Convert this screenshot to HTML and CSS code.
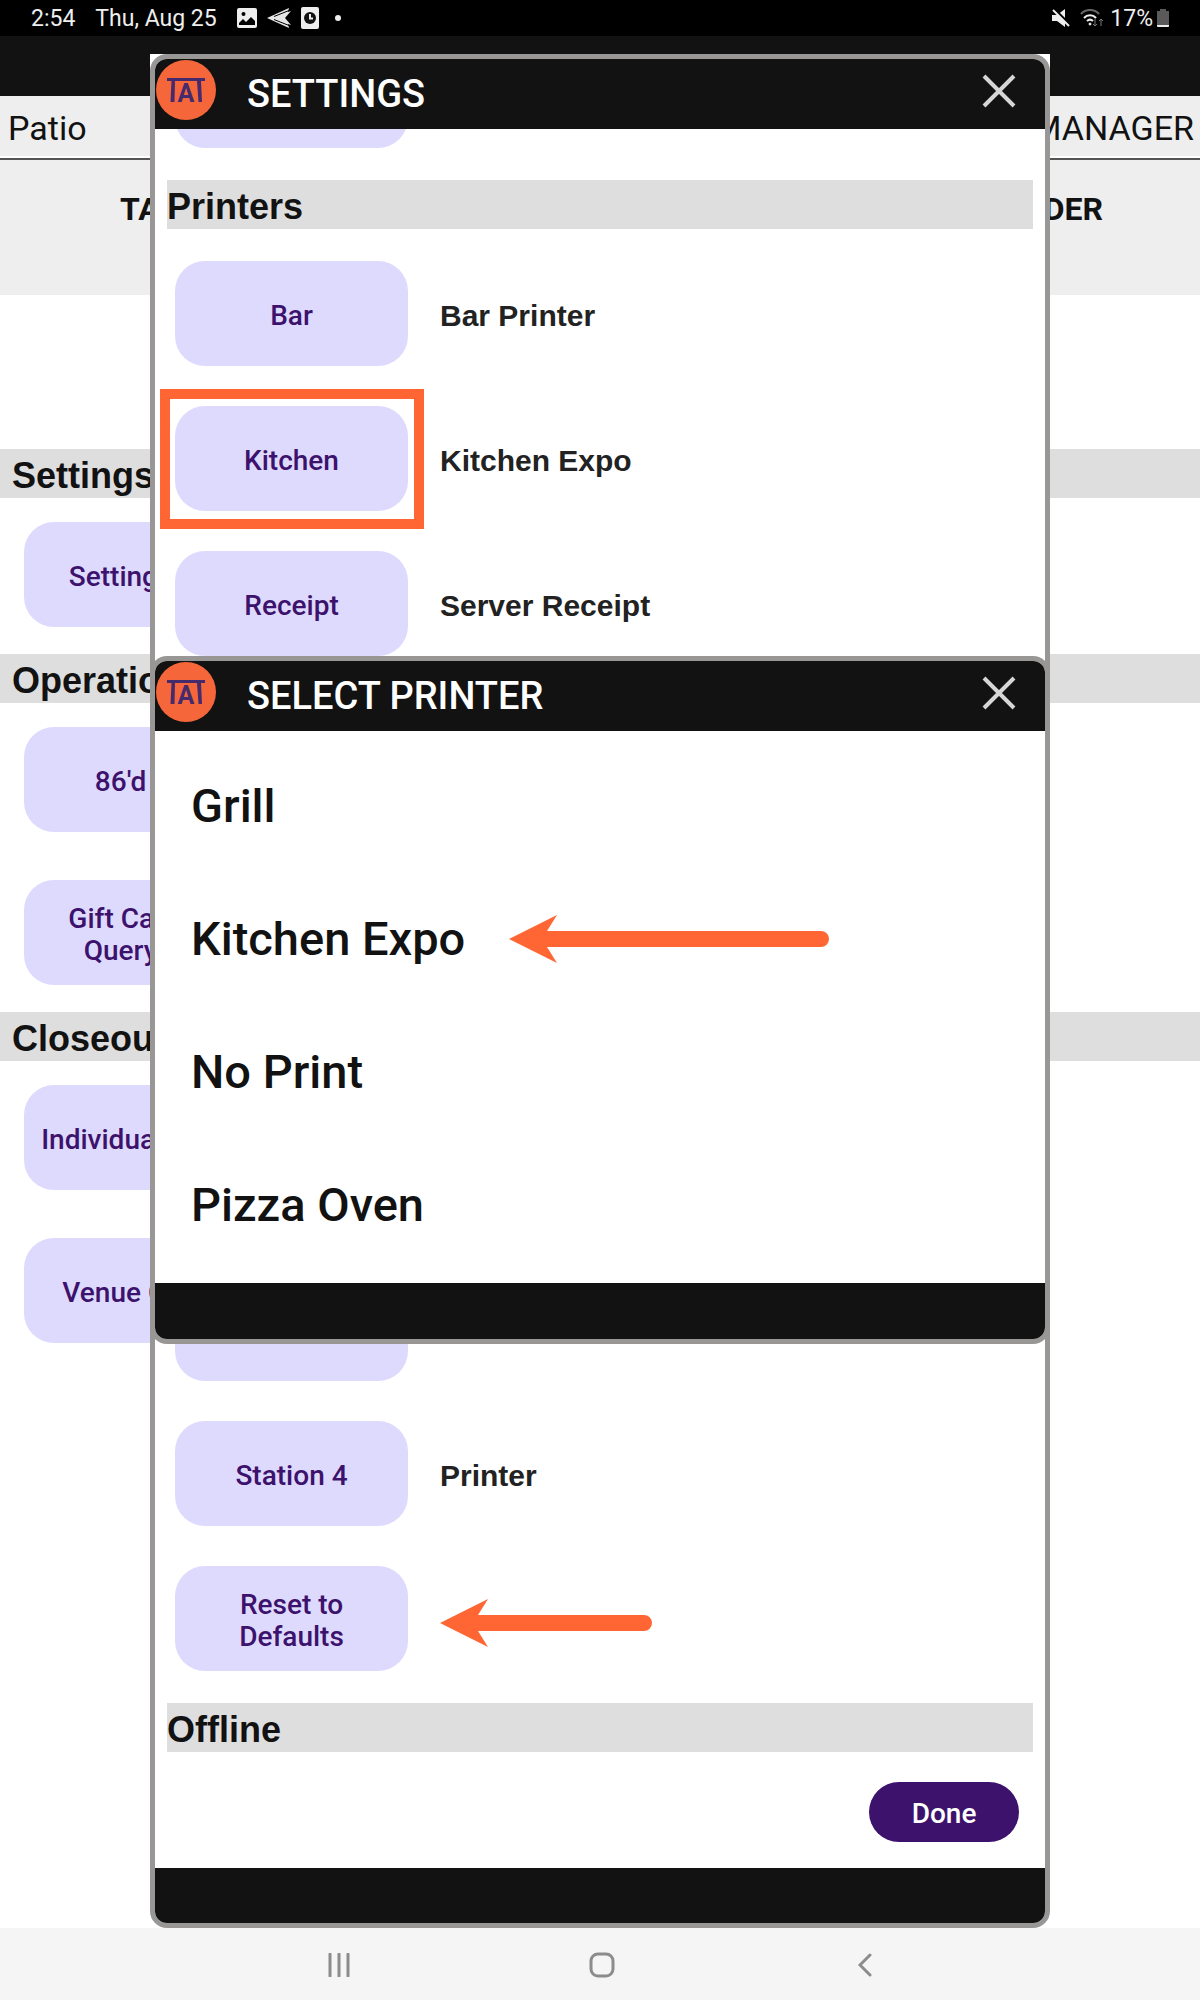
FILE: index.html
```html
<!DOCTYPE html>
<html lang="en">
<head>
<meta charset="utf-8">
<title>Settings - Select Printer</title>
<link rel="stylesheet" href="styles.css">
</head>
<body>
<svg width="0" height="0" class="defs" aria-hidden="true">
  <symbol id="logo" viewBox="0 0 60 60">
    <circle cx="30" cy="30" r="30" fill="#f5673b"/>
    <path d="M11 18h38v3H45L46 42H42.500L41 21H19L18.500 42H14.500L15.500 21H11z" fill="#452a6c"/>
    <text x="30" y="42" text-anchor="middle" class="logo-letter">A</text>
  </symbol>
  <symbol id="close" viewBox="0 0 34 34">
    <path d="M2 2L32 32M32 2L2 32" stroke="#d6d6d6" stroke-width="4" fill="none"/>
  </symbol>
</svg>

<header class="status">
  <span class="time">2:54</span>
  <span class="date">Thu, Aug 25</span>
  <svg class="s-icon" width="20" height="20" viewBox="0 0 20 20"><path fill="#eee" fill-rule="evenodd" d="M2 0h16a2 2 0 0 1 2 2v16a2 2 0 0 1-2 2H2a2 2 0 0 1-2-2V2a2 2 0 0 1 2-2zM6.500 4a2 2 0 1 0 0 4a2 2 0 0 0 0-4zM2 17h16v-4l-4-4-5 5-3-3-4 4z"/></svg>
  <svg class="s-icon" width="24" height="20" viewBox="0 0 24 20"><path fill="#e6e6e6" d="M0 10L22 0L21 4L24 3L18 10L24 17L21 16L22 20z"/><path d="M7 8.500L22 2.500M7 11.500L22 17.500" stroke="#000" stroke-width="1"/></svg>
  <svg class="s-icon" width="18" height="22" viewBox="0 0 18 22"><rect width="18" height="22" rx="2" fill="#eee"/><circle cx="9" cy="11" r="6" fill="#111"/><path d="M9 7v4.500h3" stroke="#eee" stroke-width="2" fill="none"/></svg>
  <svg class="s-icon s-dot" width="6" height="6" viewBox="0 0 6 6"><circle cx="3" cy="3" r="3" fill="#eee"/></svg>
  <span class="spacer"></span>
  <svg class="s-icon" width="18" height="18" viewBox="0 0 18 18"><path fill="#eee" d="M0 6h5l8-6v18l-8-6H0z"/><path d="M2 0L18 16" stroke="#000" stroke-width="3"/><path d="M1 1L17 17" stroke="#eee" stroke-width="2"/></svg>
  <svg class="s-icon s-wifi" width="24" height="18" viewBox="0 0 24 18" fill="none" stroke-width="2"><path d="M1 5a12 12 0 0 1 18 0" stroke="#666"/><path d="M4 9a8 8 0 0 1 12 0M7 12a4.500 4.500 0 0 1 6 0" stroke="#eee"/><circle cx="10" cy="15" r="1" fill="#eee" stroke="#eee" stroke-width="1"/><path d="M15 10v7M13 15l2 2 2-2M21 17v-7M19 12l2-2 2 2" stroke="#777" stroke-width="1"/></svg>
  <span class="battery-text">17%</span>
  <svg class="s-icon" width="12" height="19" viewBox="0 0 12 19"><path fill="#5a5a5a" d="M3 0h6v2h3v15H0V2h3z"/><path fill="#eee" d="M0 16h12v1a1 1 0 0 1-1 1H1a1 1 0 0 1-1-1z"/></svg>
</header>

<div class="stage">
  <main class="page">
    <div class="page-top"></div>
    <div class="venue-bar"><span>Patio</span><span>MANAGER</span></div>
    <nav class="tabs"><a href="#tables">TABLES</a><a href="#order">ORDER</a></nav>
    <section class="group">
      <h2 class="bar">Settings</h2>
      <button class="tile">Settings All</button>
    </section>
    <section class="group">
      <h2 class="bar">Operations</h2>
      <button class="tile">86'd All</button>
      <button class="tile">Gift Card ID Query All</button>
    </section>
    <section class="group">
      <h2 class="bar">Closeout</h2>
      <button class="tile">Individual Close</button>
      <button class="tile">Venue Close</button>
    </section>
  </main>

  <div class="settings-wrap">
    <section class="dialog settings" role="dialog" aria-labelledby="settings-title">
      <header class="dialog-head">
        <svg class="logo" width="60" height="60"><use href="#logo"/></svg>
        <h1 class="dialog-title" id="settings-title">SETTINGS</h1>
        <button class="close" aria-label="Close settings"><svg width="34" height="34"><use href="#close"/></svg></button>
      </header>
      <div class="scroller">
        <div class="rows"><div class="row"><button class="tile" aria-label="General"></button></div></div>
        <h2 class="bar">Printers</h2>
        <div class="rows">
          <div class="row"><button class="tile">Bar</button><span class="value">Bar Printer</span></div>
          <div class="row"><button class="tile marked">Kitchen</button><span class="value">Kitchen Expo</span></div>
          <div class="row"><button class="tile">Receipt</button><span class="value">Server Receipt</span></div>
          <div class="row"><button class="tile" aria-label="Report"></button></div>
          <div class="row"><button class="tile" aria-label="Runner"></button></div>
          <div class="row"><button class="tile" aria-label="Station 1"></button></div>
          <div class="row"><button class="tile" aria-label="Station 2"></button></div>
          <div class="row"><button class="tile" aria-label="Station 3"></button></div>
          <div class="row"><button class="tile">Station 4</button><span class="value">Printer</span></div>
          <div class="row"><button class="tile">Reset to Defaults</button>
            <svg class="arrow" width="212" height="48" viewBox="0 0 212 48"><path fill="#ff6633" d="M0 24L48 0L38 16H204a8 8 0 0 1 0 16H38L48 48z"/></svg>
          </div>
        </div>
        <h2 class="bar">Offline</h2>
      </div>
      <div class="actions"><button class="done">Done</button></div>
      <footer class="dialog-foot"></footer>
    </section>
  </div>
</div>

<div class="overlay">
  <section class="dialog picker" role="dialog" aria-labelledby="picker-title">
    <header class="dialog-head">
      <svg class="logo" width="60" height="60"><use href="#logo"/></svg>
      <h1 class="dialog-title" id="picker-title">SELECT PRINTER</h1>
      <button class="close" aria-label="Close printer list"><svg width="34" height="34"><use href="#close"/></svg></button>
    </header>
    <ul class="options">
      <li><button class="option">Grill</button></li>
      <li><button class="option">Kitchen Expo</button>
        <svg class="arrow-option" width="320" height="48" viewBox="0 0 320 48"><path fill="#ff6633" d="M0 24L48 0L38 16H312a8 8 0 0 1 0 16H38L48 48z"/></svg>
      </li>
      <li><button class="option">No Print</button></li>
      <li><button class="option">Pizza Oven</button></li>
    </ul>
    <footer class="dialog-foot"></footer>
  </section>
</div>

<nav class="sysnav">
  <button aria-label="Recent apps"><svg width="22" height="24" viewBox="0 0 22 24"><path d="M2 1v22M11 1v22M20 1v22" stroke="#8c8c8c" stroke-width="3" stroke-linecap="round"/></svg></button>
  <button aria-label="Home"><svg width="26" height="26" viewBox="0 0 26 26"><rect x="2" y="2" width="22" height="22" rx="7" fill="none" stroke="#8c8c8c" stroke-width="3"/></svg></button>
  <button aria-label="Back"><svg width="14" height="24" viewBox="0 0 14 24"><path d="M12 2L2 12L12 22" fill="none" stroke="#8c8c8c" stroke-width="3" stroke-linecap="round"/></svg></button>
</nav>
</body>
</html>
```
FILE: styles.css
```css
* { box-sizing: border-box; }

body {
  margin: 0;
  min-height: 100vh;
  display: flex;
  flex-direction: column;
  position: relative;
  background: #fff;
  color: #121212;
  font-family: Roboto, "Liberation Sans", sans-serif;
}

h1, h2, ul { margin: 0; padding: 0; }

button {
  border: 0;
  padding: 0;
  background: none;
  color: inherit;
  font: inherit;
}

.defs { position: absolute; }
.logo-letter { font: 700 25px Roboto, sans-serif; fill: #452a6c; }

/* Android status bar */
.status {
  height: 36px;
  padding: 0 31px;
  display: flex;
  align-items: center;
  background: #000;
  color: #eee;
  font-size: 23px;
}
.date { margin: 0 20px 0 20px; }
.s-icon { margin-right: 10px; }
.s-wifi { margin-right: 6px; }
.s-dot { margin-left: 6px; }
.spacer { flex: 1; }
.battery-text { margin-right: 4px; }
.status .s-icon:last-child { margin-right: 0; }

/* Manager page behind the dialogs */
.stage { flex: 1; position: relative; }
.page-top { height: 60px; background: #121212; }
.venue-bar {
  display: flex;
  justify-content: space-between;
  align-items: center;
  height: 60px;
  padding: 4px 6px 0 8px;
  background: #eee;
  font-size: 34px;
}
.tabs {
  display: flex;
  justify-content: space-between;
  height: 137px;
  margin-top: 2px;
  padding: 29px 97px 0 120px;
  border-top: 2px solid #555;
  background: #eee;
  font-size: 32px;
  font-weight: 700;
  line-height: 40px;
}
.tabs a { color: inherit; text-decoration: none; }

.bar {
  height: 49px;
  background: #dedede;
  font-family: "Liberation Sans", Arial, sans-serif;
  font-size: 36px;
  font-weight: 700;
  line-height: 54px;
}
.group {
  display: flex;
  flex-direction: column;
  align-items: flex-start;
  padding-bottom: 27px;
}
.tabs + .group { padding-top: 154px; }
.group .bar { width: 100%; padding-left: 12px; }
.group .tile { margin: 24px 0 0 24px; }
.group .tile + .tile { margin-top: 48px; }

.tile {
  flex: none;
  position: relative;
  width: 233px;
  height: 105px;
  padding: 4px 12px 0;
  border-radius: 30px;
  background: #dedafe;
  color: #3c126c;
  font-size: 28px;
  font-weight: 500;
  line-height: 32px;
}
.marked::after {
  content: "";
  position: absolute;
  inset: -17px -16px -18px -15px;
  border: 10px solid #ff6633;
}

/* Dialogs */
.dialog {
  display: flex;
  flex-direction: column;
  overflow: hidden;
  border: 5px solid #999796;
  border-radius: 17px;
  background: #fff;
}
.dialog-head {
  flex: none;
  display: flex;
  height: 70px;
  padding: 1px 16px 0 1px;
  background: #121212;
  color: #fff;
}
.dialog-title {
  flex: 1;
  margin-left: 31px;
  font-size: 38px;
  font-weight: 500;
  line-height: 68px;
}
.close { width: 60px; height: 62px; display: grid; place-items: center; }
.dialog-foot { flex: none; height: 55px; background: #121212; }

.settings-wrap {
  position: absolute;
  inset: 18px 12.5% 0;
  background: #fff;
}
.settings { height: 100%; }
.scroller {
  flex: 1;
  min-height: 0;
  display: flex;
  flex-direction: column;
  justify-content: flex-end;
  overflow: hidden;
  padding: 0 12px;
}
.scroller .bar { flex: none; }
.rows {
  flex: none;
  display: flex;
  flex-direction: column;
  gap: 40px;
  padding: 32px 8px;
}
.row { display: flex; align-items: center; gap: 32px; }
.value {
  padding-top: 4px;
  color: #222;
  font-family: "Liberation Sans", Arial, sans-serif;
  font-size: 30px;
  font-weight: 700;
}
.arrow { margin-top: 8px; }
.actions { flex: none; display: flex; justify-content: flex-end; padding: 30px 26px 26px; }
.done {
  width: 150px;
  height: 60px;
  padding-top: 2px;
  border-radius: 30px;
  background: #3c126c;
  color: #fff;
  font-size: 28px;
  font-weight: 500;
}

.overlay {
  position: absolute;
  inset: 0;
  display: grid;
  place-items: center;
}
.picker { width: 75%; }
.picker .dialog-foot { height: 56px; }
.options { list-style: none; padding: 8px 36px 12px; }
.options li { display: flex; align-items: center; gap: 44px; height: 133px; }
.option { font-size: 47px; font-weight: 500; }

/* Android navigation bar */
.sysnav {
  display: flex;
  justify-content: center;
  align-items: center;
  height: 72px;
  padding: 2px 0 0 4px;
  background: #f5f5f5;
}
.sysnav button { width: 263px; }
.sysnav svg { display: block; margin: 0 auto; }
```
